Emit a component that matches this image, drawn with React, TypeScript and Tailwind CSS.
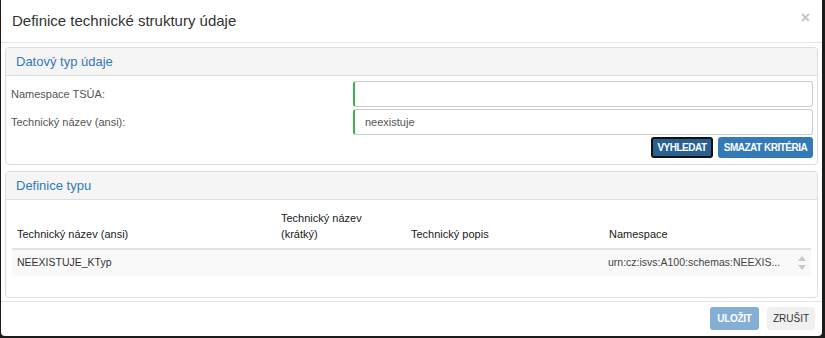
const font = { fontFamily: '"Liberation Sans", Arial, sans-serif' };

function PanelHeading({ title }: { title: string }) {
  return (
    <div className="h-[28px] flex items-center px-[10px] bg-[#f5f5f5] border-b border-[#dddddd] rounded-t-[3px]">
      <span className="text-[13px] text-[#337ab7]">{title}</span>
    </div>
  );
}

export default function App() {
  return (
    <div className="w-[825px] h-[338px] bg-[#1b1b1b] pl-[1px] pr-[3px] pb-[2px]" style={font}>
      <div className="h-full bg-white rounded-b-[4px] flex flex-col">
        {/* Header */}
        <div className="h-[43px] flex items-center justify-between pl-[11px] pr-[12px] border-b border-[#e5e5e5]">
          <h4 className="text-[15px] text-[#333]">Definice technické struktury údaje</h4>
          <span className="text-[16px] font-bold text-[#c4c4c4] leading-none -mt-[6px]">×</span>
        </div>

        <div className="px-[4px] pt-[4px] flex flex-col gap-[6px]">
          {/* Search panel */}
          <div className="border border-[#dddddd] rounded-[4px]">
            <PanelHeading title="Datový typ údaje" />
            <div className="pl-[5px] pr-[4px] pt-[5px] pb-[6px] text-[11px] text-[#555]">
              <div className="flex items-center h-[26px]">
                <label className="w-[342px]">Namespace TSÚA:</label>
                <input className="flex-1 h-[26px] border border-[#ccc] border-l-2 border-l-[#3cb04a] rounded-[3px] px-[10px] text-[11px] outline-none" />
              </div>
              <div className="flex items-center h-[26px] mt-[2px]">
                <label className="w-[342px]">Technický název (ansi):</label>
                <input
                  defaultValue="neexistuje"
                  className="flex-1 h-[26px] border border-[#ccc] border-l-2 border-l-[#3cb04a] rounded-[3px] px-[10px] text-[11px] text-[#555] outline-none"
                />
              </div>
              <div className="flex justify-end gap-[5px] mt-[2px]">
                <button className="h-[21px] w-[62px] bg-[#286090] text-white text-[10px] font-bold tracking-[-0.5px] rounded-[3px] border-2 border-[#111]">
                  VYHLEDAT
                </button>
                <button className="h-[21px] w-[95px] bg-[#337ab7] text-white text-[10px] font-bold tracking-[-0.5px] rounded-[3px]">
                  SMAZAT KRITÉRIA
                </button>
              </div>
            </div>
          </div>

          {/* Result panel */}
          <div className="border border-[#dddddd] rounded-[4px]">
            <PanelHeading title="Definice typu" />
            <div className="px-[6px] pt-[10px] pb-[21px]">
              <div className="flex items-end text-[11px] text-[#1a1a1a] border-b-2 border-[#e3e3e3] pb-[6px]">
                <div className="w-[269px] pl-[5px]">Technický název (ansi)</div>
                <div className="w-[130px] leading-[16px]">
                  Technický název
                  <br />
                  (krátký)
                </div>
                <div className="w-[198px]">Technický popis</div>
                <div className="flex-1">Namespace</div>
              </div>
              <div className="flex items-center h-[26px] bg-[#f9f9f9] text-[10.5px] text-[#333]">
                <div className="w-[269px] pl-[5px]">NEEXISTUJE_KTyp</div>
                <div className="w-[130px]" />
                <div className="w-[197px]" />
                <div className="flex-1 text-[#444]">urn:cz:isvs:A100:schemas:NEEXIS...</div>
                <div className="w-[18px] flex flex-col items-center justify-center gap-[4px]">
                  <svg width="8" height="5" viewBox="0 0 8 5"><path d="M0 5 L4 0 L8 5 Z" fill="#c8c8c8" /></svg>
                  <svg width="8" height="5" viewBox="0 0 8 5"><path d="M0 0 L4 5 L8 0 Z" fill="#c8c8c8" /></svg>
                </div>
              </div>
            </div>
          </div>
        </div>

        {/* Footer */}
        <div className="mt-auto border-t border-[#e5e5e5] h-[34px] flex items-center justify-end gap-[8px] pr-[7px] mb-[1px]">
          <button className="h-[23px] w-[49px] bg-[#337ab7] opacity-60 text-white text-[10px] font-bold tracking-[-0.3px] rounded-[3px]">
            ULOŽIT
          </button>
          <button className="h-[23px] w-[48px] bg-[#f0f0f0] text-[#333] text-[10px] rounded-[3px]">
            ZRUŠIT
          </button>
        </div>
      </div>
    </div>
  );
}
